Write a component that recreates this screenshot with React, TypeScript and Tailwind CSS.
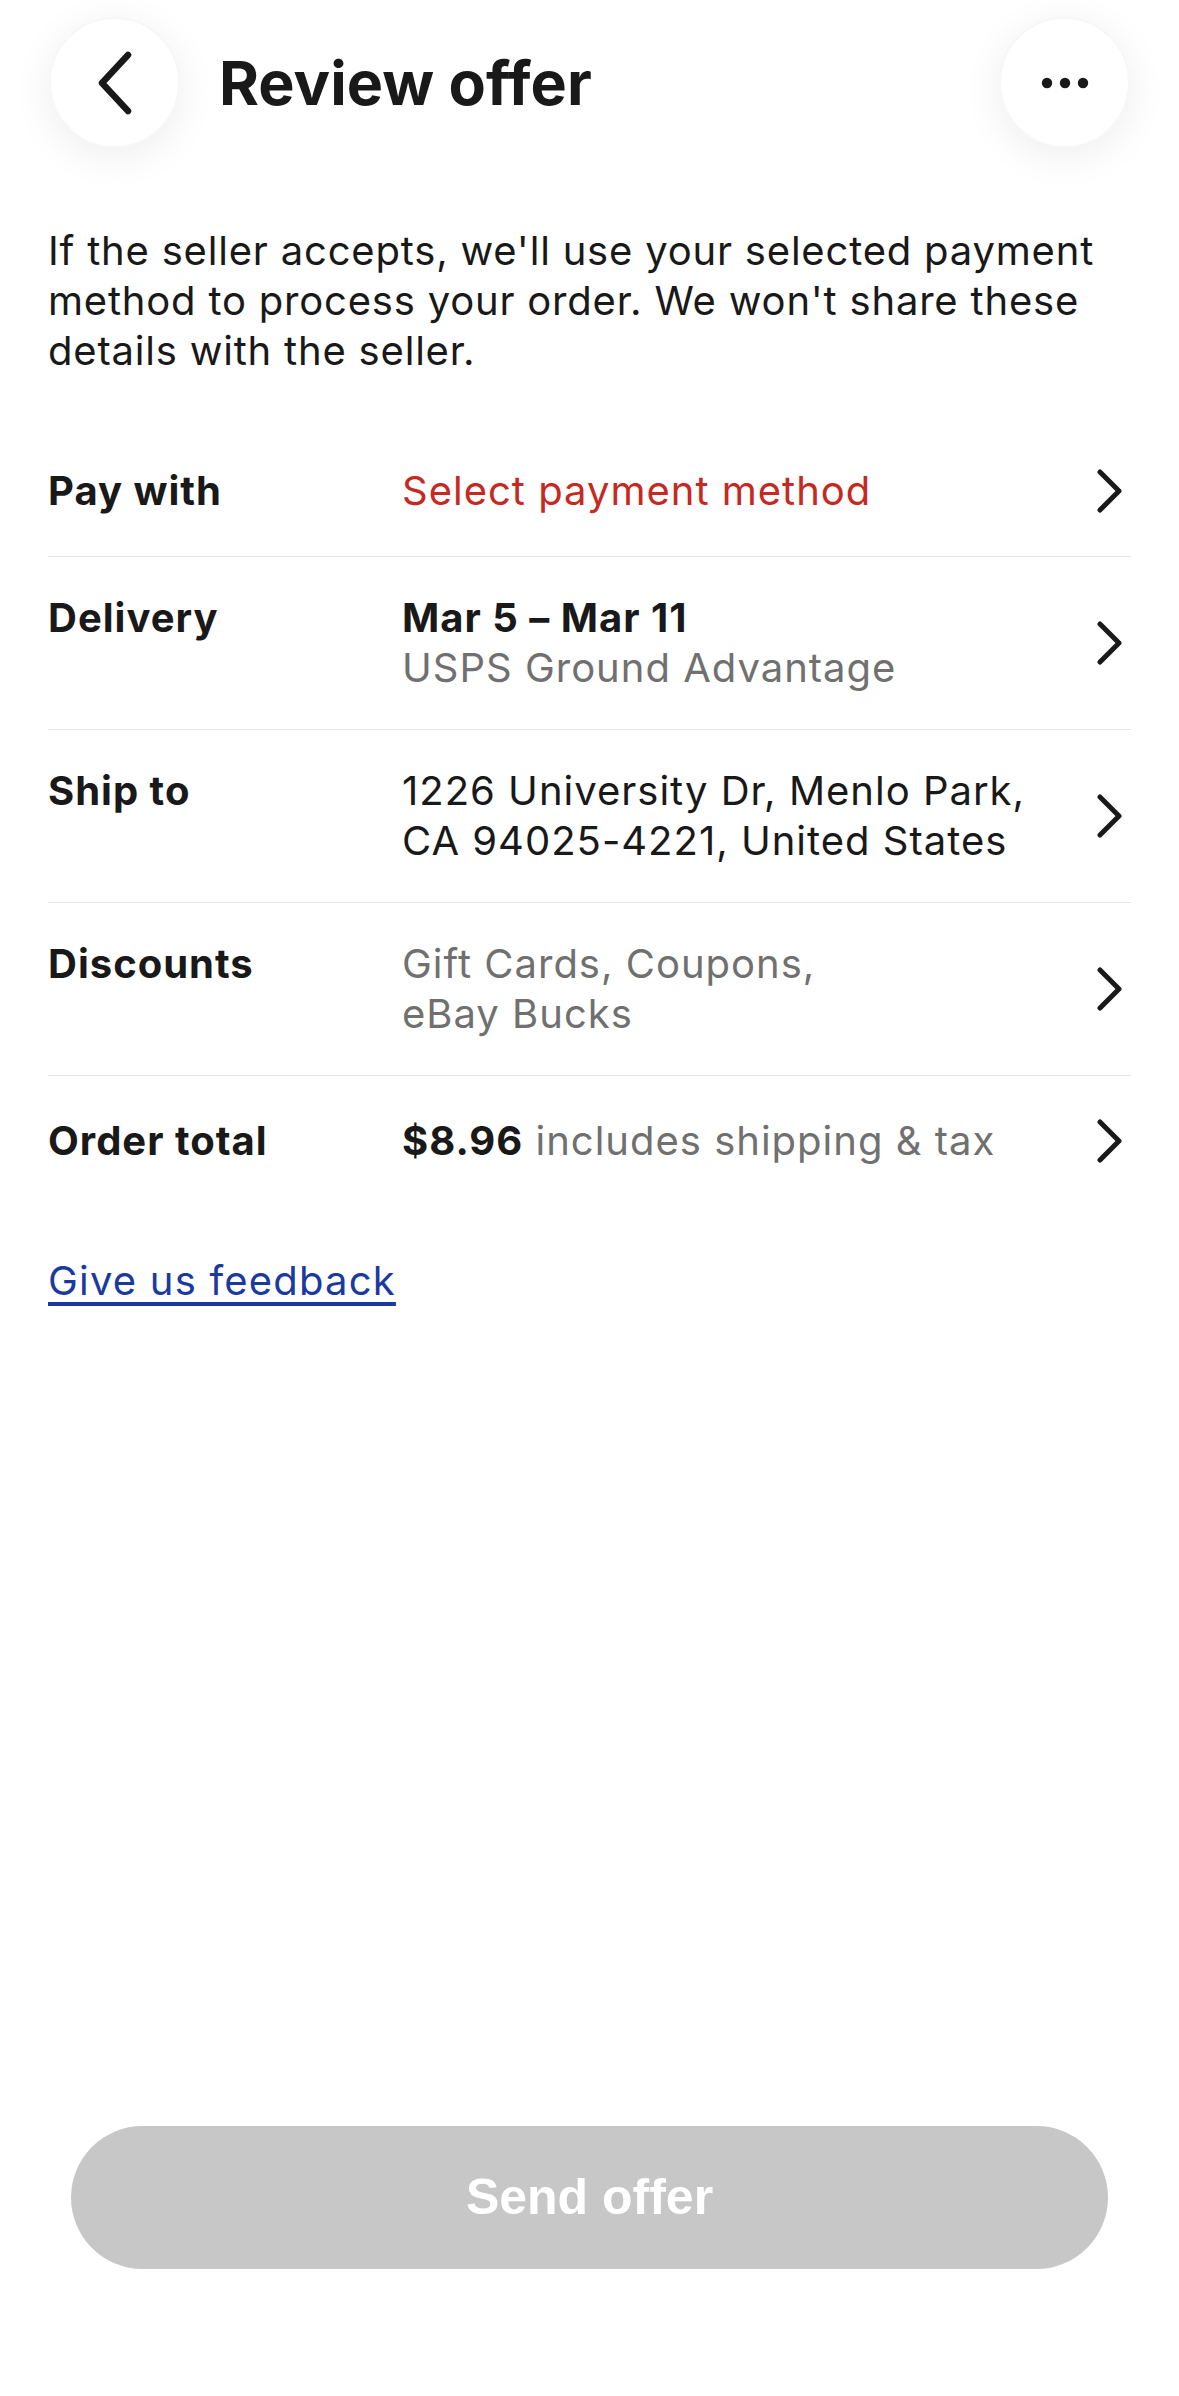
import React from 'react';

const Chevron = () => (
  <svg width="26" height="44" viewBox="0 0 26 44" fill="none" className="shrink-0">
    <path d="M3 3 L22 22 L3 41" stroke="#191919" strokeWidth="5" strokeLinecap="round" strokeLinejoin="round" />
  </svg>
);

interface RowProps {
  label: string;
  children: React.ReactNode;
  multi?: boolean;
  last?: boolean;
}

const Row: React.FC<RowProps> = ({ label, children, multi, last }) => (
  <div
    className={`flex items-center ${multi ? 'py-[36px]' : 'py-[40px]'} ${last ? '' : 'border-b border-[#e5e5e5]'}`}
  >
    <div className="w-[354px] shrink-0 self-start font-bold text-[#191919]">{label}</div>
    <div className="flex-1 min-w-0">{children}</div>
    <div className="pr-[8px]">
      <Chevron />
    </div>
  </div>
);

export default function App() {
  return (
    <div
      className="w-[1179px] h-[2396px] bg-white flex flex-col text-[#191919]"
      style={{ fontFamily: 'Inter, "Noto Sans", sans-serif' }}
    >
      {/* Header */}
      <div className="flex items-center justify-between pl-[49px] pr-[49px] pt-[17px]">
        <div className="flex items-center gap-[39px]">
          <button className="w-[131px] h-[131px] rounded-full bg-white border-2 border-[#f7f7f7] shadow-[0_8px_40px_rgba(0,0,0,0.07)] flex items-center justify-center">
            <svg width="40" height="64" viewBox="0 0 40 64" fill="none">
              <path d="M33 4 L7 32 L33 60" stroke="#191919" strokeWidth="6.5" strokeLinecap="round" strokeLinejoin="round" />
            </svg>
          </button>
          <h1 className="text-[61px] font-bold leading-none pt-[2px]">Review offer</h1>
        </div>
        <button className="w-[131px] h-[131px] rounded-full bg-white border-2 border-[#f7f7f7] shadow-[0_8px_40px_rgba(0,0,0,0.07)] flex items-center justify-center">
          <svg width="48" height="14" viewBox="0 0 48 14" fill="#191919">
            <circle cx="6" cy="7" r="5.2" />
            <circle cx="24" cy="7" r="5.2" />
            <circle cx="42" cy="7" r="5.2" />
          </svg>
        </button>
      </div>

      {/* Intro */}
      <p className="mt-[78px] px-[48px] text-[40px] leading-[50px] tracking-[0.02em]">
        If the seller accepts, we'll use your selected payment method to process your order. We won't share these details with the seller.
      </p>

      {/* Rows */}
      <div className="mx-[48px] mt-[50px] text-[40px] leading-[50px] tracking-[0.025em]">
        <Row label="Pay with">
          <span className="text-[#c5291f]">Select payment method</span>
        </Row>
        <Row label="Delivery" multi>
          <div className="font-bold">Mar 5 – Mar 11</div>
          <div className="text-[#707070]">USPS Ground Advantage</div>
        </Row>
        <Row label="Ship to" multi>
          <div>1226 University Dr, Menlo Park,</div>
          <div>CA 94025-4221, United States</div>
        </Row>
        <Row label="Discounts" multi>
          <div className="text-[#707070]">Gift Cards, Coupons,</div>
          <div className="text-[#707070]">eBay Bucks</div>
        </Row>
        <Row label="Order total" last>
          <span className="font-bold">$8.96</span>
          <span className="text-[#707070]"> includes shipping &amp; tax</span>
        </Row>
      </div>

      <div className="px-[48px] mt-[50px] text-[40px] leading-[50px] tracking-[0.03em]">
        <a href="#" className="text-[#1b3aa0] underline decoration-[4px] underline-offset-[7px]">
          Give us feedback
        </a>
      </div>

      <div className="flex-1" />

      {/* Send offer */}
      <div className="px-[71px] pb-[127px]">
        <button
          className="w-full h-[143px] rounded-full bg-[#c7c7c7] text-white text-[50px] font-bold"
          style={{ fontFamily: '"Liberation Sans", Arial, sans-serif' }}
        >
          Send offer
        </button>
      </div>
    </div>
  );
}
